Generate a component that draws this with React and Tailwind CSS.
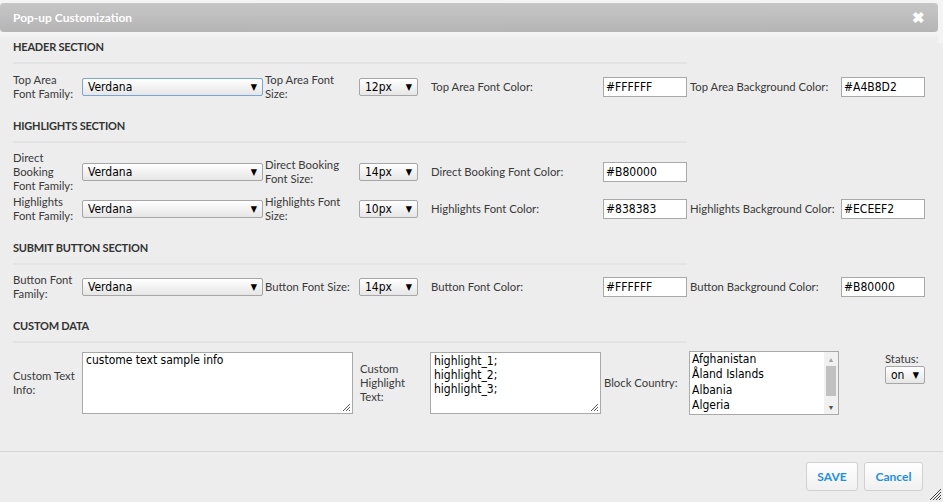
import React from "react";

const label = "text-[11.3px] leading-[14px] text-[#3a3a3a]";
const valueFont = { fontFamily: '"DejaVu Sans Condensed", "DejaVu Sans", sans-serif' };

const Select = ({ value, width, focus }) => (
  <div
    className={`flex items-center justify-between h-[18px] pl-[5px] pr-[5px] rounded-[2px] border bg-gradient-to-b from-white to-[#e6e6e6] text-[12px] text-black ${width} ${
      focus ? "border-[#7ba5d6]" : "border-[#a6a6a6]"
    }`}
    style={valueFont}
  >
    <span>{value}</span>
    <span className="text-[9px] leading-none">▼</span>
  </div>
);

const ColorInput = ({ value }) => (
  <div
    className="w-[84px] h-[20px] border border-[#a9a9a9] bg-white pl-[2px] text-[12px] leading-[18px] text-black"
    style={valueFont}
  >
    {value}
  </div>
);

const SectionTitle = ({ children }) => (
  <div className="mt-[16px] h-[18px] leading-[18px] text-[11px] font-bold text-[#333] px-[13px] tracking-[-0.2px]">
    {children}
  </div>
);

const Divider = () => <div className="mt-[6px] ml-[13px] w-[674px] h-[2px] bg-[#e3e3e3]" />;

const Row = ({ h, mt = "mt-[8px]", c }) => (
  <div className={`flex items-center pl-[13px] ${h} ${mt}`}>
    <div className={`w-[69px] shrink-0 ${label}`}>{c[0]}</div>
    <Select value="Verdana" width="w-[181px] shrink-0" focus={c[6]} />
    <div className={`w-[96px] shrink-0 pl-[2px] ${label}`}>{c[1]}</div>
    <Select value={c[2]} width="w-[59px] shrink-0" />
    <div className={`w-[185px] shrink-0 pl-[13px] ${label}`}>{c[3]}</div>
    <ColorInput value={c[4]} />
    {c[5] && (
      <>
        <div className={`w-[154px] shrink-0 pl-[3px] whitespace-nowrap ${label}`}>{c[5][0]}</div>
        <ColorInput value={c[5][1]} />
      </>
    )}
  </div>
);

const Grip = ({ className }) => (
  <svg className={className} width="10" height="10" viewBox="0 0 10 10">
    <path d="M9 2 L2 9 M9 5 L5 9 M9 8 L8 9" stroke="#555" strokeWidth="1" />
  </svg>
);

export default function App() {
  return (
    <div
      className="w-[943px] h-[502px] bg-[#f4f4f4] pt-[3px] overflow-hidden"
      style={{ fontFamily: 'Lato, "Open Sans", sans-serif' }}
    >
      <div className="relative w-[943px] h-[499px] bg-[#ededed] flex flex-col">
        <div className="w-[938px] h-[29px] rounded-[4px] bg-gradient-to-b from-[#c6c6c6] to-[#b5b5b5] flex items-center justify-between pl-[13px] pr-[13px]">
          <span className="text-white font-bold text-[12px]">Pop-up Customization</span>
          <span className="text-white font-bold text-[15px] leading-none">✖</span>
        </div>
        <div className="absolute right-0 top-0 w-[5px] h-[40px] bg-[#f4f4f4]" />

        <div className="flex-1 bg-gradient-to-b from-[#f5f5f5] to-[#ededed] to-[8px]">
          <div className="-mt-[10px]">
            <SectionTitle>HEADER SECTION</SectionTitle>
          </div>
          <Divider />
          <Row
            h="h-[28px]"
            mt="mt-[9px]"
            c={[
              <>Top Area<br />Font Family:</>,
              <>Top Area Font<br />Size:</>,
              "12px",
              "Top Area Font Color:",
              "#FFFFFF",
              ["Top Area Background Color:", "#A4B8D2"],
              true,
            ]}
          />

          <SectionTitle>HIGHLIGHTS SECTION</SectionTitle>
          <Divider />
          <Row
            h="h-[42px]"
            c={[
              <>Direct<br />Booking<br />Font Family:</>,
              <>Direct Booking<br />Font Size:</>,
              "14px",
              "Direct Booking Font Color:",
              "#B80000",
            ]}
          />
          <Row
            h="h-[28px]"
            mt="mt-[2px]"
            c={[
              <>Highlights<br />Font Family:</>,
              <>Highlights Font<br />Size:</>,
              "10px",
              "Highlights Font Color:",
              "#838383",
              ["Highlights Background Color:", "#ECEEF2"],
            ]}
          />

          <SectionTitle>SUBMIT BUTTON SECTION</SectionTitle>
          <Divider />
          <Row
            h="h-[28px]"
            c={[
              <>Button Font<br />Family:</>,
              "Button Font Size:",
              "14px",
              "Button Font Color:",
              "#FFFFFF",
              ["Button Background Color:", "#B80000"],
            ]}
          />

          <SectionTitle>CUSTOM DATA</SectionTitle>
          <Divider />
          <div className="flex items-center pl-[13px] mt-[8px] h-[63px]">
            <div className={`w-[69px] shrink-0 ${label}`}>Custom Text<br />Info:</div>
            <div className="relative shrink-0 w-[271px] h-[62px] border border-[#a9a9a9] bg-white px-[3px] text-[12px] leading-[15px] text-black" style={valueFont}>
              custome text sample info
              <Grip className="absolute right-[1px] bottom-[1px]" />
            </div>
            <div className={`w-[77px] shrink-0 pl-[7px] ${label}`}>Custom<br />Highlight<br />Text:</div>
            <div className="relative shrink-0 w-[171px] h-[62px] border border-[#a9a9a9] bg-white px-[3px] pt-[1px] text-[12px] leading-[14px] text-black" style={valueFont}>
              highlight_1;<br />highlight_2;<br />highlight_3;
              <Grip className="absolute right-[1px] bottom-[1px]" />
            </div>
            <div className={`w-[88px] shrink-0 pl-[3px] ${label}`}>Block Country:</div>
            <div className="flex shrink-0 w-[150px] h-[64px] border border-[#a9a9a9] bg-white">
              <div className="flex-1 pl-[2px] text-[12px] leading-[15.5px] text-black" style={valueFont}>
                <div>Afghanistan</div>
                <div>Åland Islands</div>
                <div>Albania</div>
                <div>Algeria</div>
              </div>
              <div className="w-[14px] flex flex-col items-center bg-[#f1f1f1]">
                <span className="text-[7px] leading-[14px] text-[#a3a3a3]">▲</span>
                <div className="w-[10px] h-[30px] bg-[#c1c1c1]" />
                <div className="flex-1" />
                <span className="text-[7px] leading-[14px] text-[#505050]">▼</span>
              </div>
            </div>
            <div className="ml-[46px] self-start flex flex-col items-start">
              <span className={`${label} mt-[1px]`}>Status:</span>
              <Select value="on" width="w-[40px]" />
            </div>
          </div>
        </div>

        <div className="h-[51px] border-t border-[#d6d6d6] flex justify-end items-start pt-[10px] pr-[20px] gap-[6px]">
          <button className="w-[52px] h-[29px] rounded-[3px] border border-[#d0d0d0] bg-gradient-to-b from-white to-[#f0f0f0] text-[12px] font-bold text-[#1f8fe0]">
            SAVE
          </button>
          <button className="w-[59px] h-[29px] rounded-[3px] border border-[#d0d0d0] bg-gradient-to-b from-white to-[#f0f0f0] text-[12px] font-bold text-[#1f8fe0]">
            Cancel
          </button>
        </div>
        <svg className="absolute right-[1px] bottom-[1px]" width="13" height="13" viewBox="0 0 13 13">
          <path d="M12 1 L1 12 M12 4 L4 12 M12 7 L7 12 M12 10 L10 12" stroke="#444" strokeWidth="1" />
        </svg>
      </div>
    </div>
  );
}
